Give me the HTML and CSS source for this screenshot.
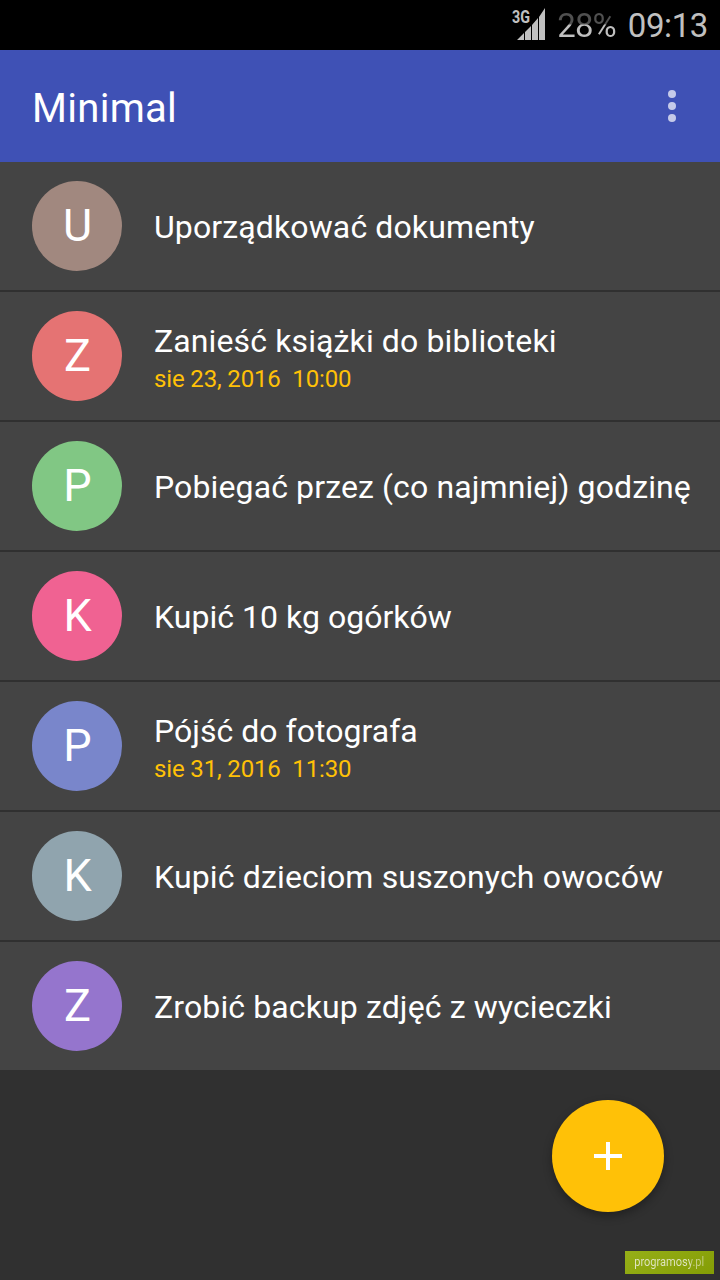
FILE: index.html
```html
<!DOCTYPE html>
<html lang="pl">
<head>
<meta charset="utf-8">
<title>Minimal</title>
<link rel="stylesheet" href="styles.css">
</head>
<body>
<div class="screen">
  <div class="status">
    <svg class="signal" width="36" height="34" viewBox="0 0 36 34">
      <text class="network" x="0" y="16" textLength="18" lengthAdjust="spacingAndGlyphs">3G</text>
      <path fill="#c0c0c0" d="M5 33L12 26V33ZM13 25L19 19V33H13ZM20 18L26 11V33H20ZM27 10L33 1V33H27Z"/>
    </svg>
    <span class="battery">28%</span>
    <span class="clock">09:13</span>
  </div>
  <header class="appbar">
    <h1 class="title">Minimal</h1>
    <svg class="more" width="8" height="32" viewBox="0 0 8 32" fill="#c5cae9"><circle cx="4" cy="4" r="4"/><circle cx="4" cy="16" r="4"/><circle cx="4" cy="28" r="4"/></svg>
  </header>
  <ul class="list">
    <li class="item"><span class="avatar brown">U</span><div class="body"><span class="name">Uporządkować dokumenty</span></div></li>
    <li class="item"><span class="avatar red">Z</span><div class="body"><span class="name">Zanieść książki do biblioteki</span><span class="date">sie 23, 2016&nbsp; 10:00</span></div></li>
    <li class="item"><span class="avatar green">P</span><div class="body"><span class="name">Pobiegać przez (co najmniej) godzinę</span></div></li>
    <li class="item"><span class="avatar pink">K</span><div class="body"><span class="name tight">Kupić 10 kg ogórków</span></div></li>
    <li class="item"><span class="avatar indigo">P</span><div class="body"><span class="name tight">Pójść do fotografa</span><span class="date">sie 31, 2016&nbsp; 11:30</span></div></li>
    <li class="item"><span class="avatar gray">K</span><div class="body"><span class="name loose">Kupić dzieciom suszonych owoców</span></div></li>
    <li class="item"><span class="avatar purple">Z</span><div class="body"><span class="name">Zrobić backup zdjęć z wycieczki</span></div></li>
  </ul>
  <button class="fab" aria-label="Dodaj"><svg width="28" height="28" viewBox="0 0 28 28"><path fill="#fff" d="M12 0h4v12h12v4H16v12h-4V16H0v-4h12z"/></svg></button>
  <div class="watermark"><span class="brand">programosy.pl</span></div>
</div>
</body>
</html>
```

FILE: styles.css
```css
body { margin: 0; background: #303030; font-family: Roboto, "Noto Sans", sans-serif; color: #fff; }
.screen { position: relative; width: 720px; height: 1280px; overflow: hidden; background: #303030; }
.status { display: flex; justify-content: flex-end; box-sizing: border-box; height: 50px; padding-right: 12px; background: #000; color: #c0c0c0; font-size: 33px; line-height: 52px; }
.signal { margin: 7px 9px 0 0; }
.network { font-size: 18px; font-weight: 700; fill: #c0c0c0; }
.battery { margin-right: 12px; letter-spacing: -.9px; background: linear-gradient(#505050 0 24px, #c0c0c0 25px); -webkit-background-clip: text; background-clip: text; color: transparent; }
.clock { letter-spacing: -.4px; }
.appbar { display: flex; justify-content: space-between; align-items: center; box-sizing: border-box; height: 112px; padding: 0 44px 0 32px; background: #3f51b5; }
.title { margin: 5px 0 0; font-size: 40px; font-weight: 400; line-height: 49px; letter-spacing: .3px; }
.list { margin: 0; padding: 0; list-style: none; display: flex; flex-direction: column; gap: 2px; }
.item { display: flex; align-items: center; gap: 32px; height: 128px; padding-left: 32px; background: #444; }
.avatar { flex: none; box-sizing: border-box; width: 90px; height: 90px; padding-left: 1px; border-radius: 50%; font-size: 45px; line-height: 89px; text-align: center; }
.brown { background: #a1887f; }
.red { background: #e57373; }
.green { background: #81c784; }
.pink { background: #f06292; }
.indigo { background: #7986cb; }
.gray { background: #90a4ae; }
.purple { background: #9575cd; }
.body { display: flex; flex-direction: column; white-space: nowrap; padding-top: 1px; }
.name { font-size: 32px; line-height: 42px; letter-spacing: .12px; }
.tight { letter-spacing: .03px; }
.loose { letter-spacing: .16px; }
.date { padding-top: 2px; font-size: 24px; line-height: 30px; letter-spacing: -.15px; color: #ffc107; }
.fab { position: absolute; left: 552px; top: 1100px; display: flex; align-items: center; justify-content: center; width: 112px; height: 112px; padding: 0; border: 0; border-radius: 50%; background: #ffc107; box-shadow: 0 4px 10px rgba(0,0,0,.32); }
.watermark { position: absolute; left: 625px; top: 1251px; display: flex; justify-content: center; width: 89px; height: 23px; background: linear-gradient(150deg, #96af18, #849d05); }
.brand { font-size: 13px; line-height: 22px; transform: scaleX(.85); background: linear-gradient(90deg, #e1e5c5 80%, #c5cf86 82%); -webkit-background-clip: text; background-clip: text; color: transparent; }
```
